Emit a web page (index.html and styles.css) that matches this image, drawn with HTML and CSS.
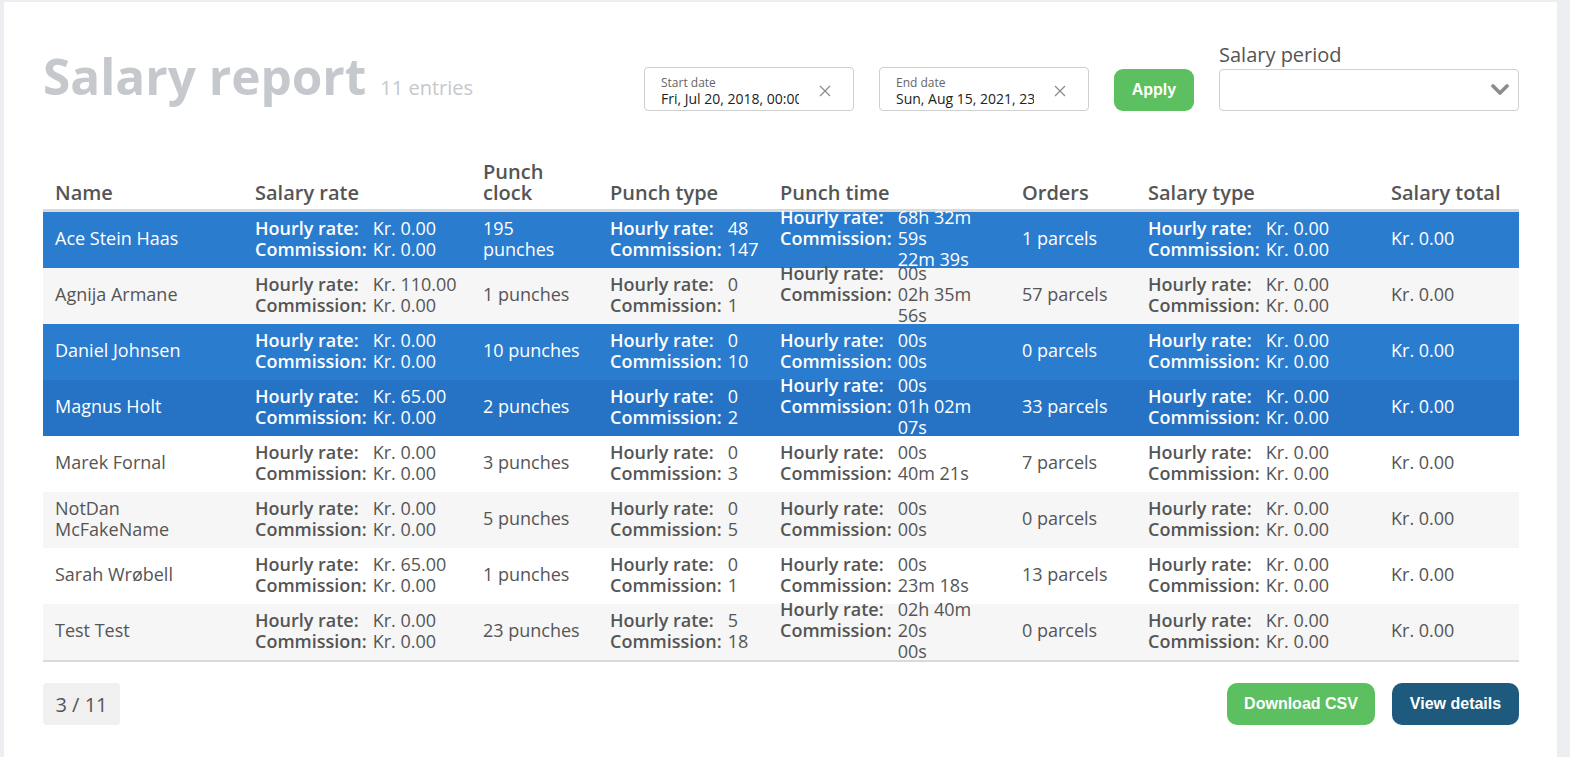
FILE: index.html
```html
<!DOCTYPE html>
<html lang="en">
<head>
<meta charset="utf-8">
<title>Salary report</title>
<link rel="stylesheet" href="styles.css">
</head>
<body>
<div class="card">
  <header class="top">
    <div class="title-wrap">
      <h1 class="title">Salary report</h1>
      <span class="count">11 entries</span>
    </div>
    <div class="filters">
      <div class="date-field">
        <div class="date-text">
          <span class="date-label">Start date</span>
          <span class="date-value">Fri, Jul 20, 2018, 00:00</span>
        </div>
        <svg class="clear" width="12" height="12" viewBox="0 0 12 12"><path d="M1 1 L11 11 M11 1 L1 11" stroke="#8a8a8a" stroke-width="1.2" fill="none"/></svg>
      </div>
      <div class="date-field">
        <div class="date-text">
          <span class="date-label">End date</span>
          <span class="date-value">Sun, Aug 15, 2021, 23:59</span>
        </div>
        <svg class="clear" width="12" height="12" viewBox="0 0 12 12"><path d="M1 1 L11 11 M11 1 L1 11" stroke="#8a8a8a" stroke-width="1.2" fill="none"/></svg>
      </div>
      <button class="btn btn-green btn-apply">Apply</button>
      <div class="period">
        <span class="period-label">Salary period</span>
        <div class="select">
          <svg class="chevron" width="18" height="12" viewBox="0 0 18 12"><path d="M2 2 L9 9 L16 2" stroke="#8c8c8c" stroke-width="3.6" fill="none" stroke-linecap="round" stroke-linejoin="round"/></svg>
        </div>
      </div>
    </div>
  </header>

  <div class="table">
    <div class="row head">
      <div class="cell">Name</div>
      <div class="cell">Salary rate</div>
      <div class="cell">Punch<br>clock</div>
      <div class="cell">Punch type</div>
      <div class="cell">Punch time</div>
      <div class="cell">Orders</div>
      <div class="cell">Salary type</div>
      <div class="cell">Salary total</div>
    </div>

    <div class="row selected">
      <div class="cell">Ace Stein Haas</div>
      <div class="cell"><div class="pair"><div class="labels"><div>Hourly rate:</div><div>Commission:</div></div><div class="values"><div>Kr. 0.00</div><div>Kr. 0.00</div></div></div></div>
      <div class="cell">195<br>punches</div>
      <div class="cell"><div class="pair"><div class="labels"><div>Hourly rate:</div><div>Commission:</div></div><div class="values"><div>48</div><div>147</div></div></div></div>
      <div class="cell"><div class="pair"><div class="labels"><div>Hourly rate:</div><div>Commission:</div></div><div class="values narrow"><div>68h 32m 59s</div><div>22m 39s</div></div></div></div>
      <div class="cell">1 parcels</div>
      <div class="cell"><div class="pair"><div class="labels"><div>Hourly rate:</div><div>Commission:</div></div><div class="values"><div>Kr. 0.00</div><div>Kr. 0.00</div></div></div></div>
      <div class="cell">Kr. 0.00</div>
    </div>

    <div class="row striped">
      <div class="cell">Agnija Armane</div>
      <div class="cell"><div class="pair"><div class="labels"><div>Hourly rate:</div><div>Commission:</div></div><div class="values"><div>Kr. 110.00</div><div>Kr. 0.00</div></div></div></div>
      <div class="cell">1 punches</div>
      <div class="cell"><div class="pair"><div class="labels"><div>Hourly rate:</div><div>Commission:</div></div><div class="values"><div>0</div><div>1</div></div></div></div>
      <div class="cell"><div class="pair"><div class="labels"><div>Hourly rate:</div><div>Commission:</div></div><div class="values narrow"><div>00s</div><div>02h 35m 56s</div></div></div></div>
      <div class="cell">57 parcels</div>
      <div class="cell"><div class="pair"><div class="labels"><div>Hourly rate:</div><div>Commission:</div></div><div class="values"><div>Kr. 0.00</div><div>Kr. 0.00</div></div></div></div>
      <div class="cell">Kr. 0.00</div>
    </div>

    <div class="row selected">
      <div class="cell">Daniel Johnsen</div>
      <div class="cell"><div class="pair"><div class="labels"><div>Hourly rate:</div><div>Commission:</div></div><div class="values"><div>Kr. 0.00</div><div>Kr. 0.00</div></div></div></div>
      <div class="cell">10 punches</div>
      <div class="cell"><div class="pair"><div class="labels"><div>Hourly rate:</div><div>Commission:</div></div><div class="values"><div>0</div><div>10</div></div></div></div>
      <div class="cell"><div class="pair"><div class="labels"><div>Hourly rate:</div><div>Commission:</div></div><div class="values narrow"><div>00s</div><div>00s</div></div></div></div>
      <div class="cell">0 parcels</div>
      <div class="cell"><div class="pair"><div class="labels"><div>Hourly rate:</div><div>Commission:</div></div><div class="values"><div>Kr. 0.00</div><div>Kr. 0.00</div></div></div></div>
      <div class="cell">Kr. 0.00</div>
    </div>

    <div class="row selected hovered">
      <div class="cell">Magnus Holt</div>
      <div class="cell"><div class="pair"><div class="labels"><div>Hourly rate:</div><div>Commission:</div></div><div class="values"><div>Kr. 65.00</div><div>Kr. 0.00</div></div></div></div>
      <div class="cell">2 punches</div>
      <div class="cell"><div class="pair"><div class="labels"><div>Hourly rate:</div><div>Commission:</div></div><div class="values"><div>0</div><div>2</div></div></div></div>
      <div class="cell"><div class="pair"><div class="labels"><div>Hourly rate:</div><div>Commission:</div></div><div class="values narrow"><div>00s</div><div>01h 02m 07s</div></div></div></div>
      <div class="cell">33 parcels</div>
      <div class="cell"><div class="pair"><div class="labels"><div>Hourly rate:</div><div>Commission:</div></div><div class="values"><div>Kr. 0.00</div><div>Kr. 0.00</div></div></div></div>
      <div class="cell">Kr. 0.00</div>
    </div>

    <div class="row">
      <div class="cell">Marek Fornal</div>
      <div class="cell"><div class="pair"><div class="labels"><div>Hourly rate:</div><div>Commission:</div></div><div class="values"><div>Kr. 0.00</div><div>Kr. 0.00</div></div></div></div>
      <div class="cell">3 punches</div>
      <div class="cell"><div class="pair"><div class="labels"><div>Hourly rate:</div><div>Commission:</div></div><div class="values"><div>0</div><div>3</div></div></div></div>
      <div class="cell"><div class="pair"><div class="labels"><div>Hourly rate:</div><div>Commission:</div></div><div class="values narrow"><div>00s</div><div>40m 21s</div></div></div></div>
      <div class="cell">7 parcels</div>
      <div class="cell"><div class="pair"><div class="labels"><div>Hourly rate:</div><div>Commission:</div></div><div class="values"><div>Kr. 0.00</div><div>Kr. 0.00</div></div></div></div>
      <div class="cell">Kr. 0.00</div>
    </div>

    <div class="row striped">
      <div class="cell">NotDan<br>McFakeName</div>
      <div class="cell"><div class="pair"><div class="labels"><div>Hourly rate:</div><div>Commission:</div></div><div class="values"><div>Kr. 0.00</div><div>Kr. 0.00</div></div></div></div>
      <div class="cell">5 punches</div>
      <div class="cell"><div class="pair"><div class="labels"><div>Hourly rate:</div><div>Commission:</div></div><div class="values"><div>0</div><div>5</div></div></div></div>
      <div class="cell"><div class="pair"><div class="labels"><div>Hourly rate:</div><div>Commission:</div></div><div class="values narrow"><div>00s</div><div>00s</div></div></div></div>
      <div class="cell">0 parcels</div>
      <div class="cell"><div class="pair"><div class="labels"><div>Hourly rate:</div><div>Commission:</div></div><div class="values"><div>Kr. 0.00</div><div>Kr. 0.00</div></div></div></div>
      <div class="cell">Kr. 0.00</div>
    </div>

    <div class="row">
      <div class="cell">Sarah Wrøbell</div>
      <div class="cell"><div class="pair"><div class="labels"><div>Hourly rate:</div><div>Commission:</div></div><div class="values"><div>Kr. 65.00</div><div>Kr. 0.00</div></div></div></div>
      <div class="cell">1 punches</div>
      <div class="cell"><div class="pair"><div class="labels"><div>Hourly rate:</div><div>Commission:</div></div><div class="values"><div>0</div><div>1</div></div></div></div>
      <div class="cell"><div class="pair"><div class="labels"><div>Hourly rate:</div><div>Commission:</div></div><div class="values narrow"><div>00s</div><div>23m 18s</div></div></div></div>
      <div class="cell">13 parcels</div>
      <div class="cell"><div class="pair"><div class="labels"><div>Hourly rate:</div><div>Commission:</div></div><div class="values"><div>Kr. 0.00</div><div>Kr. 0.00</div></div></div></div>
      <div class="cell">Kr. 0.00</div>
    </div>

    <div class="row striped last">
      <div class="cell">Test Test</div>
      <div class="cell"><div class="pair"><div class="labels"><div>Hourly rate:</div><div>Commission:</div></div><div class="values"><div>Kr. 0.00</div><div>Kr. 0.00</div></div></div></div>
      <div class="cell">23 punches</div>
      <div class="cell"><div class="pair"><div class="labels"><div>Hourly rate:</div><div>Commission:</div></div><div class="values"><div>5</div><div>18</div></div></div></div>
      <div class="cell"><div class="pair"><div class="labels"><div>Hourly rate:</div><div>Commission:</div></div><div class="values narrow"><div>02h 40m 20s</div><div>00s</div></div></div></div>
      <div class="cell">0 parcels</div>
      <div class="cell"><div class="pair"><div class="labels"><div>Hourly rate:</div><div>Commission:</div></div><div class="values"><div>Kr. 0.00</div><div>Kr. 0.00</div></div></div></div>
      <div class="cell">Kr. 0.00</div>
    </div>
  </div>

  <footer class="bottom">
    <div class="pager">3 / 11</div>
    <div class="actions">
      <button class="btn btn-green btn-csv">Download CSV</button>
      <button class="btn btn-dark btn-details">View details</button>
    </div>
  </footer>
</div>
</body>
</html>
```

FILE: styles.css
```css
html, body {
  margin: 0;
  padding: 0;
}
body {
  background: #eceef2;
  font-family: "Open Sans", "Noto Sans", sans-serif;
  color: #555;
  height: 757px;
  overflow: hidden;
}
.card {
  background: #fff;
  margin: 2px 13px 0 4px;
  padding: 0 38px 0 39px;
  min-height: 760px;
  box-sizing: border-box;
}

/* header */
.top {
  display: flex;
  justify-content: space-between;
  align-items: flex-end;
  padding-top: 41px;
}
.title-wrap {
  display: flex;
  align-items: baseline;
  margin-bottom: 10px;
}
.title {
  margin: 0;
  font-size: 49.5px;
  line-height: 48px;
  font-weight: 700;
  color: #c5c8cd;
}
.count {
  margin-left: 14px;
  font-size: 20px;
  color: #c5c8cd;
}
.filters {
  display: flex;
  align-items: flex-end;
  gap: 25px;
}
.date-field {
  width: 210px;
  height: 44px;
  box-sizing: border-box;
  border: 1px solid #cfcfcf;
  border-radius: 4px;
  display: flex;
  align-items: center;
  padding: 0 22px 0 16px;
  justify-content: space-between;
}
.date-text {
  display: flex;
  flex-direction: column;
  width: 138px;
  overflow: hidden;
  white-space: nowrap;
  padding-top: 6px;
}
.date-label {
  font-size: 12px;
  line-height: 14px;
  color: #666;
}
.date-value {
  font-size: 14px;
  line-height: 18px;
  color: #222;
}
.clear {
  display: block;
  margin-top: 3px;
}
.btn {
  border: none;
  font-family: "Liberation Sans", Arial, sans-serif;
  font-weight: 700;
  font-size: 16px;
  color: #fff;
  cursor: pointer;
}
.btn-green {
  background: #5cbf60;
}
.btn-dark {
  background: #1d5a7d;
}
.btn-apply {
  width: 80px;
  height: 42px;
  border-radius: 9px;
}
.period {
  display: flex;
  flex-direction: column;
}
.period-label {
  font-size: 20px;
  line-height: 24px;
  color: #555;
  margin-bottom: 2px;
}
.select {
  width: 300px;
  height: 42px;
  box-sizing: border-box;
  border: 1px solid #cfcfcf;
  border-radius: 4px;
  display: flex;
  align-items: center;
  justify-content: flex-end;
  padding-right: 9px;
}

/* table */
.table {
  margin-top: 50px;
}
.row {
  display: grid;
  grid-template-columns: 200px 228px 127px 170px 242px 126px 243px 140px;
  grid-template-rows: 56px;
  height: 56px;
  font-size: 18px;
  line-height: 21px;
  color: #555;
}
.row.head {
  height: auto;
  grid-template-rows: auto;
  font-size: 20px;
  font-weight: 600;
  line-height: 21px;
  border-bottom: 3px solid #dadada;
  padding-bottom: 6px;
}
.row.head .cell {
  align-items: flex-end;
  color: #555;
  padding-bottom: 0;
}
.row.striped {
  background: #f6f6f6;
}
.row.selected {
  background: #2a7ccf;
  color: #fff;
}
.row.selected.hovered {
  background: #2673c5;
}
.row.last {
  border-bottom: 2px solid #dadada;
}
.cell {
  padding: 0 12px 3px;
  display: flex;
  align-items: center;
  min-width: 0;
  min-height: 0;
}
.pair {
  display: flex;
  align-items: flex-start;
}
.labels {
  font-weight: 600;
  margin-right: 6px;
  white-space: nowrap;
}
.values {
  white-space: nowrap;
}
.values.narrow {
  white-space: normal;
  max-width: 96px;
}

/* footer */
.bottom {
  display: flex;
  justify-content: space-between;
  align-items: center;
  margin-top: 21px;
}
.pager {
  background: #f0f0f0;
  border-radius: 4px;
  width: 77px;
  height: 42px;
  display: flex;
  align-items: center;
  justify-content: center;
  font-size: 20px;
  color: #555;
}
.actions {
  display: flex;
  gap: 17px;
}
.btn-csv {
  width: 148px;
  height: 42px;
  border-radius: 10px;
}
.btn-details {
  width: 127px;
  height: 42px;
  border-radius: 10px;
}
```
